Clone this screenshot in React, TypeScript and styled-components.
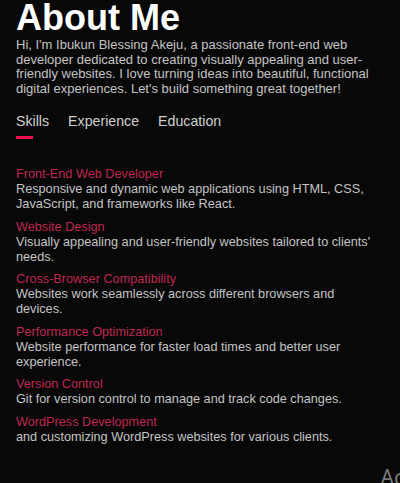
import React, { useState } from 'react';
import styled, { createGlobalStyle } from 'styled-components';

const GlobalStyle = createGlobalStyle`
  html, body {
    margin: 0;
    padding: 0;
    background-color: #080808;
  }
  body {
    font-family: "Liberation Sans", Arial, sans-serif;
    color: #c4c4c4;
  }
`;

const Page = styled.div`
  position: relative;
  width: 400px;
  height: 483px;
  overflow: hidden;
  background-color: #080808;
  padding: 0 16px;
  box-sizing: border-box;
`;

const Title = styled.h1`
  margin: 0;
  font-size: 36px;
  font-weight: 700;
  line-height: 36px;
  color: #ffffff;
`;

const Intro = styled.p`
  margin: 2px 0 0;
  font-size: 13px;
  line-height: 14.5px;
  color: #c4c4c4;
`;

const TabList = styled.div`
  display: flex;
  gap: 19px;
  margin-top: 17px;
`;

const Tab = styled.button<{ $active: boolean }>`
  position: relative;
  background: none;
  border: none;
  padding: 0 0 10px;
  font-family: inherit;
  font-size: 14.2px;
  color: #cfcfcf;
  cursor: pointer;

  &::after {
    content: '';
    position: absolute;
    left: 0;
    bottom: 0;
    width: ${p => (p.$active ? '17px' : '0')};
    height: 3px;
    background-color: #f0124e;
  }
`;

const SkillList = styled.ul`
  list-style: none;
  max-width: 360px;
  margin: 28px 0 0;
  padding: 0;
  display: flex;
  flex-direction: column;
  gap: 7.5px;
`;

const SkillItem = styled.li`
  font-size: 12.7px;
  line-height: 15px;
`;

const SkillName = styled.div`
  color: #bf2650;
`;

const SkillText = styled.div`
  color: #c4c4c4;
`;

const Watermark = styled.div`
  position: absolute;
  right: -4px;
  bottom: -8px;
  font-family: "Noto Sans", sans-serif;
  font-size: 21px;
  color: #7a7a7a;
`;

const skills = [
  {
    name: 'Front-End Web Developer',
    text: 'Responsive and dynamic web applications using HTML, CSS, JavaScript, and frameworks like React.',
  },
  {
    name: 'Website Design',
    text: "Visually appealing and user-friendly websites tailored to clients' needs.",
  },
  {
    name: 'Cross-Browser Compatibility',
    text: 'Websites work seamlessly across different browsers and devices.',
  },
  {
    name: 'Performance Optimization',
    text: 'Website performance for faster load times and better user experience.',
  },
  {
    name: 'Version Control',
    text: 'Git for version control to manage and track code changes.',
  },
  {
    name: 'WordPress Development',
    text: 'and customizing WordPress websites for various clients.',
  },
];

const tabs = ['Skills', 'Experience', 'Education'];

const App: React.FC = () => {
  const [active, setActive] = useState('Skills');

  return (
    <>
      <GlobalStyle />
      <Page>
        <Title>About Me</Title>
        <Intro>
          Hi, I'm Ibukun Blessing Akeju, a passionate front-end web developer dedicated to creating
          visually appealing and user-friendly websites. I love turning ideas into beautiful,
          functional digital experiences. Let's build something great together!
        </Intro>
        <TabList>
          {tabs.map(t => (
            <Tab key={t} $active={active === t} onClick={() => setActive(t)}>
              {t}
            </Tab>
          ))}
        </TabList>
        <SkillList>
          {skills.map(s => (
            <SkillItem key={s.name}>
              <SkillName>{s.name}</SkillName>
              <SkillText>{s.text}</SkillText>
            </SkillItem>
          ))}
        </SkillList>
        <Watermark>Ac</Watermark>
      </Page>
    </>
  );
};

export default App;
